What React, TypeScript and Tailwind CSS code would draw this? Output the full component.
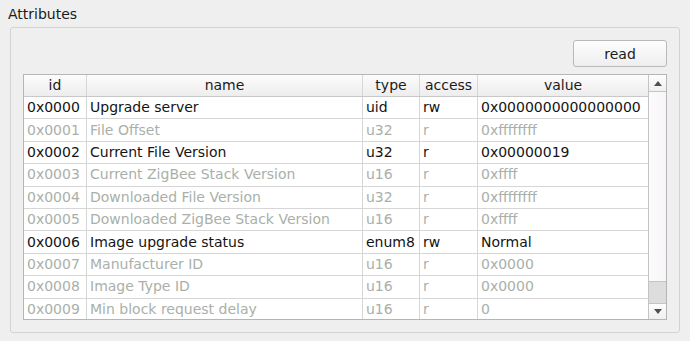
const rows = [
  { id: "0x0000", name: "Upgrade server", type: "uid", access: "rw", value: "0x0000000000000000", on: true },
  { id: "0x0001", name: "File Offset", type: "u32", access: "r", value: "0xffffffff", on: false },
  { id: "0x0002", name: "Current File Version", type: "u32", access: "r", value: "0x00000019", on: true },
  { id: "0x0003", name: "Current ZigBee Stack Version", type: "u16", access: "r", value: "0xffff", on: false },
  { id: "0x0004", name: "Downloaded File Version", type: "u32", access: "r", value: "0xffffffff", on: false },
  { id: "0x0005", name: "Downloaded ZigBee Stack Version", type: "u16", access: "r", value: "0xffff", on: false },
  { id: "0x0006", name: "Image upgrade status", type: "enum8", access: "rw", value: "Normal", on: true },
  { id: "0x0007", name: "Manufacturer ID", type: "u16", access: "r", value: "0x0000", on: false },
  { id: "0x0008", name: "Image Type ID", type: "u16", access: "r", value: "0x0000", on: false },
  { id: "0x0009", name: "Min block request delay", type: "u16", access: "r", value: "0", on: false },
];

const HeadCell = ({ label, className }: { label: string; className: string }) => (
  <div className={`${className} flex items-center justify-center border-r border-[#d6d6d6] h-full`}>
    {label}
  </div>
);

export default function App() {
  return (
    <div className="w-[690px] h-[341px] bg-[#efefef] text-[14px] text-[#1b1b1b] font-['DejaVu_Sans',sans-serif] overflow-hidden">
      <div className="pl-[8px] pt-[6px] leading-[17px] h-[27px]">Attributes</div>
      <div className="ml-[10px] w-[670px] h-[306px] border border-[#d3d3d3] rounded-[3px] bg-[#efefef] p-[12px] flex flex-col">
        <div className="flex justify-end">
          <button className="w-[94px] h-[27px] border border-[#b9b9b9] rounded-[3px] bg-gradient-to-b from-[#fdfdfd] to-[#eeeeee] leading-none">
            read
          </button>
        </div>
        <div className="mt-[7px] h-[246px] border border-[#b5b5b5] bg-white flex overflow-hidden">
          <div className="w-[624px] flex flex-col overflow-hidden">
            <div className="h-[22px] shrink-0 flex border-b border-[#c8c8c8] bg-gradient-to-b from-[#fdfcfd] to-[#eeedee]">
              <HeadCell label="id" className="w-[63px]" />
              <HeadCell label="name" className="w-[276px]" />
              <HeadCell label="type" className="w-[57px]" />
              <HeadCell label="access" className="w-[58px]" />
              <div className="flex-1 flex items-center justify-center h-full">value</div>
            </div>
            {rows.map((r) => (
              <div
                key={r.id}
                className={`h-[22.4px] shrink-0 flex border-b border-[#d6d6d6] ${r.on ? "text-[#141414]" : "text-[#a9b0a9]"}`}
              >
                <div className="w-[63px] pl-[3px] border-r border-[#d6d6d6] flex items-center whitespace-nowrap">{r.id}</div>
                <div className="w-[276px] pl-[3px] border-r border-[#d6d6d6] flex items-center whitespace-nowrap">{r.name}</div>
                <div className="w-[57px] pl-[3px] border-r border-[#d6d6d6] flex items-center">{r.type}</div>
                <div className="w-[58px] pl-[3px] border-r border-[#d6d6d6] flex items-center">{r.access}</div>
                <div className="flex-1 pl-[3px] flex items-center whitespace-nowrap">{r.value}</div>
              </div>
            ))}
          </div>
          <div className="w-[18px] border-l border-[#c4c4c4] flex flex-col bg-[#dedede]">
            <div className="h-[17px] shrink-0 border-b border-[#c4c4c4] bg-gradient-to-b from-[#fdfdfd] to-[#f0f0f0] flex items-center justify-center">
              <svg width="8" height="5" viewBox="0 0 8 5"><path d="M0 5 L4 0 L8 5 Z" fill="#505050" /></svg>
            </div>
            <div className="h-[190px] shrink-0 border-b border-[#c4c4c4] bg-gradient-to-r from-[#fcfafc] to-[#f7f5f7]" />
            <div className="flex-1 bg-[#dddddd]" />
            <div className="h-[16px] shrink-0 border-t border-[#c4c4c4] bg-gradient-to-b from-[#fdfdfd] to-[#f0f0f0] flex items-center justify-center">
              <svg width="8" height="5" viewBox="0 0 8 5"><path d="M0 0 L4 5 L8 0 Z" fill="#505050" /></svg>
            </div>
          </div>
        </div>
      </div>
    </div>
  );
}
